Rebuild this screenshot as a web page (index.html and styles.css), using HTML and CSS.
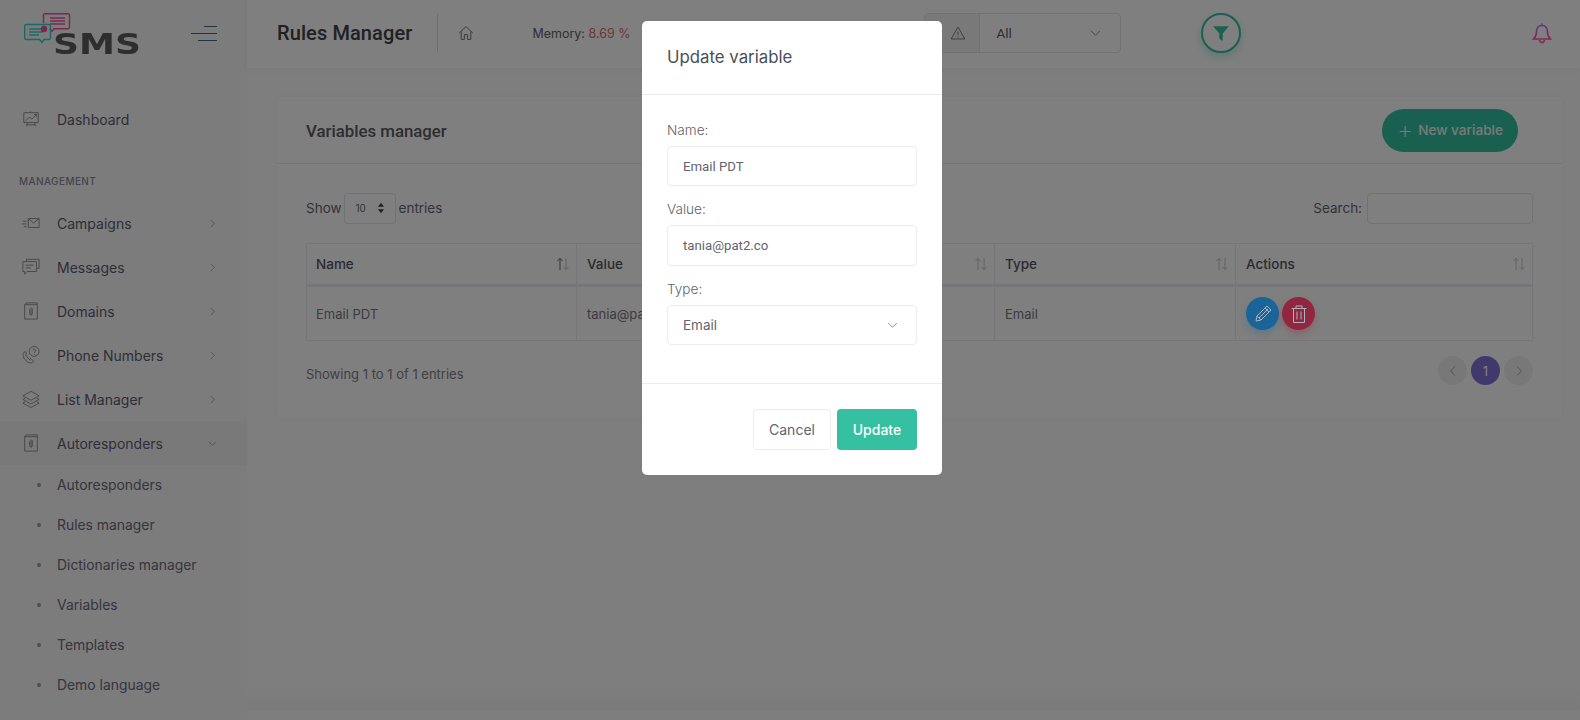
FILE: index.html
```html
<!DOCTYPE html>
<html lang="en">
<head>
    <meta charset="UTF-8">
    <meta name="viewport" content="width=device-width, initial-scale=1.0">
    <title>Rules Manager</title>
    <link rel="stylesheet" href="styles.css">
</head>
<body>
    <div class="layout">
        <aside class="sidebar">
            <div class="brand">
                <svg class="logo" viewBox="0 0 118 46" width="118" height="46">
                    <g fill="none" stroke-width="1.400">
                        <path d="M21 .8h23a1.500 1.500 0 0 1 1.500 1.500v12a1.500 1.500 0 0 1-1.500 1.500H30l-2 2.500-2.500-2.500" stroke="#7a2850"/>
                        <path d="M26 5h15M26 8h15M26 11h15" stroke="#7a2850"/>
                        <path d="M21 .8a1.500 1.500 0 0 0-1.500 1.500v8" stroke="#7a2850"/>
                        <path d="M2 11.500h23a1.500 1.500 0 0 1 1.500 1.500v12a1.500 1.500 0 0 1-1.500 1.500h-5l-2 3-2.500-3H2A1.500 1.500 0 0 1 .7 25V13A1.500 1.500 0 0 1 2 11.500z" stroke="#1b6868"/>
                        <path d="M5 16h14M5 19h14M5 22h10" stroke="#1b6868"/>
                    </g>
                    <circle cx="20" cy="16" r="3.200" fill="#7a2850"/>
                    <text class="logo-text" x="29" y="41" textLength="88" lengthAdjust="spacingAndGlyphs">SMS</text>
                </svg>
                <button class="burger" aria-label="Toggle menu"><span></span><span></span><span></span></button>
            </div>
            <nav class="menu">
                <a class="menu-item">
                    <svg class="menu-icon" viewBox="0 0 20 20"><path d="M2 3h16v11H2zM9.500 3V1.500M6 14l-1 4M14 14l1 4M5.500 16.500h9M4 12l4-4 3 2 5-5M13.500 5H16v2.500"/></svg>
                    <span>Dashboard</span>
                </a>
                <div class="menu-title">MANAGEMENT</div>
                <a class="menu-item">
                    <svg class="menu-icon" viewBox="0 0 20 20"><path d="M7 5h12v10H7zM7 5l6 5 6-5M1 8h4M0 11h5M2 14h3"/></svg>
                    <span>Campaigns</span>
                    <svg class="chev" viewBox="0 0 10 10"><path d="M3 1l4 4-4 4"/></svg>
                </a>
                <a class="menu-item">
                    <svg class="menu-icon" viewBox="0 0 20 20"><path d="M5 3.500V1.500h14v10h-3M1 4h15v11H5.500L3 18v-3H1zM4 8h9M4 11h6"/></svg>
                    <span>Messages</span>
                    <svg class="chev" viewBox="0 0 10 10"><path d="M3 1l4 4-4 4"/></svg>
                </a>
                <a class="menu-item">
                    <svg class="menu-icon" viewBox="0 0 20 20"><path d="M3 3h14v16H3zM3 3l1.500-2h12.500v2M10 6v8M8.500 8v5a1.500 1.500 0 0 0 3 0V7"/></svg>
                    <span>Domains</span>
                    <svg class="chev" viewBox="0 0 10 10"><path d="M3 1l4 4-4 4"/></svg>
                </a>
                <a class="menu-item">
                    <svg class="menu-icon" viewBox="0 0 20 20"><circle cx="13.500" cy="6" r="5.500"/><path d="M12 4.500a1.600 1.600 0 1 1 2 2v1M14 9v.5M3.500 6C0 8 1 13 4 16s7 4 9 1l-3-3-2 1-4-5 1-2z"/></svg>
                    <span>Phone Numbers</span>
                    <svg class="chev" viewBox="0 0 10 10"><path d="M3 1l4 4-4 4"/></svg>
                </a>
                <a class="menu-item">
                    <svg class="menu-icon" viewBox="0 0 20 20"><path d="M10 1.500L19 6.500l-9 5-9-5zM3.500 9L1 10.500l9 5 9-5L16.500 9M3.500 13L1 14.500l9 5 9-5L16.500 13"/></svg>
                    <span>List Manager</span>
                    <svg class="chev" viewBox="0 0 10 10"><path d="M3 1l4 4-4 4"/></svg>
                </a>
                <a class="menu-item active">
                    <svg class="menu-icon" viewBox="0 0 20 20"><path d="M3 3h14v16H3zM3 3l1.500-2h12.500v2M10 6v8M8.500 8v5a1.500 1.500 0 0 0 3 0V7"/></svg>
                    <span>Autoresponders</span>
                    <svg class="chev" viewBox="0 0 10 10"><path d="M1 3l4 4 4-4"/></svg>
                </a>
                <ul class="submenu">
                    <li>Autoresponders</li>
                    <li>Rules manager</li>
                    <li>Dictionaries manager</li>
                    <li>Variables</li>
                    <li>Templates</li>
                    <li>Demo language</li>
                </ul>
            </nav>
        </aside>

        <div class="main">
            <header class="topbar">
                <h1 class="page-title">Rules Manager</h1>
                <svg class="home-icon" viewBox="0 0 20 20"><path d="M1.500 10L10 2l8.500 8M4 8v10h4v-6h4v6h4V8"/></svg>
                <div class="memory">Memory: <span class="memory-value">8.69 %</span></div>
                <div class="alert-filter">
                    <span class="alert-addon">
                        <svg viewBox="0 0 20 20"><path d="M10 2.500L18.500 17.500h-17zM10 8v5M10 14.500v1.500"/></svg>
                    </span>
                    <span class="alert-select">All
                        <svg class="chev-big" viewBox="0 0 12 8"><path d="M1 1l5 5 5-5"/></svg>
                    </span>
                </div>
                <button class="filter-btn" aria-label="Filter">
                    <svg viewBox="0 0 16 16"><path d="M1 2h14L9.500 8.500V15l-3-2V8.500z"/></svg>
                </button>
                <svg class="bell" viewBox="0 0 20 22">
                    <defs>
                        <linearGradient id="bell-grad" x1="0" y1="0" x2="0" y2="1">
                            <stop offset="0" stop-color="#5f3388"/>
                            <stop offset="1" stop-color="#8c2850"/>
                        </linearGradient>
                    </defs>
                    <path d="M10 1.500v2M10 3.500c-4 0-5.500 3-5.500 6.500 0 3.500-1 5-3 7h17c-2-2-3-3.500-3-7 0-3.500-1.500-6.500-5.500-6.500zM7.500 18c.5 2 1.500 2.500 2.500 2.500s2-.5 2.500-2.500" fill="none" stroke="url(#bell-grad)" stroke-width="1.600"/>
                </svg>
            </header>

            <section class="card">
                <div class="card-head">
                    <h2>Variables manager</h2>
                    <button class="btn-new"><span class="plus">+</span> New variable</button>
                </div>
                <div class="card-body">
                    <div class="table-tools">
                        <div class="length">Show
                            <span class="length-select">10
                                <svg viewBox="0 0 8 14"><path d="M4 1l3.500 4.500h-7zM4 13L.5 8.500h7z"/></svg>
                            </span>
                            entries</div>
                        <div class="search">Search: <span class="search-box"></span></div>
                    </div>
                    <table class="data-table">
                        <thead>
                            <tr>
                                <th class="col-name">Name<svg class="sort" viewBox="0 0 14 14"><path class="on" d="M4 13V1.500M1.500 4L4 1.500 6.500 4"/><path d="M10 1v11.500M7.500 10l2.500 2.500 2.500-2.500"/></svg></th>
                                <th class="col-value">Value<svg class="sort" viewBox="0 0 14 14"><path d="M4 13V1.500M1.500 4L4 1.500 6.500 4M10 1v11.500M7.500 10l2.500 2.500 2.500-2.500"/></svg></th>
                                <th class="col-type">Type<svg class="sort" viewBox="0 0 14 14"><path d="M4 13V1.500M1.500 4L4 1.500 6.500 4M10 1v11.500M7.500 10l2.500 2.500 2.500-2.500"/></svg></th>
                                <th>Actions<svg class="sort" viewBox="0 0 14 14"><path d="M4 13V1.500M1.500 4L4 1.500 6.500 4M10 1v11.500M7.500 10l2.500 2.500 2.500-2.500"/></svg></th>
                            </tr>
                        </thead>
                        <tbody>
                            <tr>
                                <td>Email PDT</td>
                                <td>tania@pat2.co</td>
                                <td>Email</td>
                                <td>
                                    <div class="row-actions">
                                        <button class="round blue" aria-label="Edit">
                                            <svg viewBox="0 0 20 20"><path d="M3 17l1-5L14 2l4 4L8 16zM12 4l4 4M4 12l4 4M6 14L15 5"/></svg>
                                        </button>
                                        <button class="round red" aria-label="Delete">
                                            <svg viewBox="0 0 20 20"><path d="M2.500 4.500h15M7 4.500V2h6v2.500M4.500 4.500v14h11v-14M8 7.500v8M12 7.500v8"/></svg>
                                        </button>
                                    </div>
                                </td>
                            </tr>
                        </tbody>
                    </table>
                    <div class="table-foot">
                        <div class="info">Showing 1 to 1 of 1 entries</div>
                        <div class="pages">
                            <span class="page"><svg viewBox="0 0 10 10"><path d="M7 0.500L2.500 5 7 9.500"/></svg></span>
                            <span class="page current">1</span>
                            <span class="page"><svg viewBox="0 0 10 10"><path d="M3 0.500L7.500 5 3 9.500"/></svg></span>
                        </div>
                    </div>
                </div>
            </section>
            <div class="page-foot"></div>
        </div>
    </div>

    <div class="backdrop"></div>

    <div class="modal">
        <div class="modal-head">Update variable</div>
        <form class="modal-body">
            <label class="field-label">Name:</label>
            <div class="field roboto">Email PDT</div>
            <label class="field-label">Value:</label>
            <div class="field field-value roboto">tania@pat2.co</div>
            <label class="field-label">Type:</label>
            <div class="field select">Email
                <svg class="chev-big" viewBox="0 0 12 8"><path d="M1 1l5 5 5-5"/></svg>
            </div>
        </form>
        <div class="modal-foot">
            <button class="btn btn-cancel">Cancel</button>
            <button class="btn btn-update">Update</button>
        </div>
    </div>
</body>
</html>
```

FILE: styles.css
```css
* {
    box-sizing: border-box;
}

html, body {
    height: 100%;
}

body {
    margin: 0;
    font-family: Inter, "Noto Sans", sans-serif;
    font-size: 14px;
    color: #6e6b7b;
    background-color: #fcfcfc;
    overflow: hidden;
}

button {
    font-family: inherit;
    border: none;
    padding: 0;
    cursor: pointer;
}

.layout {
    display: flex;
    height: 720px;
}

/* sidebar */
.sidebar {
    width: 247px;
    flex-shrink: 0;
    background-color: #f8f8f8;
}

.brand {
    display: flex;
    align-items: flex-start;
    justify-content: space-between;
    height: 68px;
    padding: 13px 30px 0 24px;
}

/* the logo and bell keep their colour over the backdrop, as in the reference */
.logo {
    display: block;
    position: relative;
    z-index: 2;
    overflow: visible;
}

.logo-text {
    font-family: "DejaVu Sans", sans-serif;
    font-weight: 700;
    font-size: 29px;
    fill: #2e2e2e;
}

.burger {
    display: flex;
    flex-direction: column;
    align-items: flex-end;
    gap: 6px;
    width: 26px;
    margin-top: 13px;
    background: none;
}

.burger span {
    display: block;
    height: 1px;
    background-color: #3d6f8f;
}

.burger span:nth-child(1) {
    width: 13px;
}

.burger span:nth-child(2) {
    width: 26px;
}

.burger span:nth-child(3) {
    width: 19px;
}

.menu {
    padding-top: 29px;
}

.menu-item {
    display: flex;
    align-items: center;
    height: 44px;
    padding: 0 30px 0 22px;
    color: #5f5d70;
    font-size: 14px;
}

.menu-item span {
    margin-left: 17px;
    flex-grow: 1;
}

.menu-item.active {
    background-color: #f3f3f3;
}

.menu-icon {
    width: 18px;
    height: 18px;
    flex-shrink: 0;
    fill: none;
    stroke: #8a8a94;
    stroke-width: 1;
}

.chev {
    width: 9px;
    height: 9px;
    fill: none;
    stroke: #a8a8ad;
    stroke-width: 1;
}

.menu-title {
    margin: 33px 0 12px 19px;
    color: #8a8a9c;
    font-size: 10px;
    font-weight: 500;
    letter-spacing: 0.4px;
    line-height: 15px;
}

.submenu {
    list-style: none;
    margin: 0;
    padding: 0;
}

.submenu li {
    position: relative;
    height: 40px;
    line-height: 40px;
    padding-left: 57px;
    color: #6e6b7b;
    font-size: 13.900px;
}

.submenu li::before {
    content: "";
    position: absolute;
    left: 37px;
    top: 18px;
    width: 4px;
    height: 4px;
    border-radius: 50%;
    background-color: #9a9aa8;
}

/* top bar */
.main {
    flex-grow: 1;
    display: flex;
    flex-direction: column;
    min-width: 0;
}

.topbar {
    display: flex;
    align-items: center;
    height: 68px;
    padding: 0 28px 2px 30px;
    background-color: #ffffff;
    box-shadow: 0 2px 6px rgba(0, 0, 0, 0.04);
}

.page-title {
    margin: 0;
    padding-right: 25px;
    height: 38px;
    line-height: 38px;
    border-right: 1px solid #dddddd;
    font-family: Roboto, sans-serif;
    font-size: 20px;
    font-weight: 500;
    letter-spacing: 0.1px;
    color: #42424a;
}

.home-icon {
    width: 16px;
    height: 16px;
    margin-left: 20px;
    fill: none;
    stroke: #70707c;
    stroke-width: 1.200;
}

.memory {
    margin-left: 58px;
    font-size: 12.500px;
    color: #5e5e68;
    white-space: nowrap;
}

.memory-value {
    color: #e06a72;
}

.alert-filter {
    display: flex;
    width: 197px;
    height: 40px;
    margin-left: 293px;
    border: 1px solid #e4e4e6;
    border-radius: 4px;
}

.alert-addon {
    display: flex;
    align-items: center;
    justify-content: flex-end;
    width: 55px;
    padding-right: 13px;
    background-color: #f3f3f5;
    border-right: 1px solid #e4e4e6;
}

.alert-addon svg {
    width: 16px;
    height: 16px;
    fill: none;
    stroke: #7a7a88;
    stroke-width: 1.200;
}

.alert-select {
    display: flex;
    align-items: center;
    justify-content: space-between;
    flex-grow: 1;
    padding: 0 19px 0 17px;
    font-family: Roboto, sans-serif;
    font-size: 13.500px;
    color: #5c5c68;
}

.chev-big {
    width: 11px;
    height: 7px;
    fill: none;
    stroke: #7a7a88;
    stroke-width: 1;
}

.filter-btn {
    display: flex;
    align-items: center;
    justify-content: center;
    width: 40px;
    height: 40px;
    margin-left: 80px;
    border: 2px solid #35c0a1;
    border-radius: 50%;
    background-color: #ffffff;
    box-shadow: 0 4px 10px rgba(53, 192, 161, 0.3);
}

.filter-btn svg {
    width: 18px;
    height: 18px;
    fill: #35c0a1;
}

.bell {
    position: relative;
    z-index: 2;
    width: 20px;
    height: 22px;
    margin-left: auto;
}

/* card */
.card {
    margin: 29px 18px 0 30px;
    height: 320px;
    background-color: #ffffff;
    border-radius: 4px;
    box-shadow: 0 0 6px rgba(0, 0, 0, 0.03);
}

.card-head {
    display: flex;
    align-items: center;
    justify-content: space-between;
    height: 67px;
    padding: 2px 44px 0 29px;
    border-bottom: 1px solid #e8e8e8;
}

.card-head h2 {
    margin: 0;
    font-family: Roboto, sans-serif;
    font-size: 16.800px;
    font-weight: 500;
    color: #5a5a62;
}

.btn-new {
    display: flex;
    align-items: center;
    justify-content: center;
    gap: 5px;
    width: 136px;
    height: 43px;
    margin-bottom: 2px;
    border-radius: 22px;
    background-color: #35c0a1;
    color: #e8f8f4;
    font-size: 13.600px;
    font-weight: 500;
}

.plus {
    font-size: 25px;
    font-weight: 200;
    line-height: 1;
}

.card-body {
    padding: 28px 29px 0 29px;
}

.table-tools {
    display: flex;
    align-items: center;
    justify-content: space-between;
    height: 32px;
    font-size: 13.500px;
    color: #66666f;
}

.length {
    display: flex;
    align-items: center;
    gap: 2px;
}

.length-select {
    display: flex;
    align-items: center;
    justify-content: space-between;
    width: 52px;
    height: 31px;
    margin-right: 1px;
    padding: 0 10px 0 11px;
    border: 1px solid #e4e4e8;
    border-radius: 4px;
    font-size: 10px;
}

.length-select svg {
    width: 8px;
    height: 12px;
    fill: #44444c;
}

.search {
    display: flex;
    align-items: center;
    gap: 5px;
}

.search-box {
    display: block;
    width: 166px;
    height: 31px;
    border: 1px solid #e4e4e8;
    border-radius: 4px;
}

.data-table {
    width: 100%;
    margin-top: 19px;
    border-collapse: collapse;
    table-layout: fixed;
    font-size: 13px;
}

.data-table th, .data-table td {
    border: 1px solid #ececf0;
    padding: 0 10px;
    text-align: left;
}

.data-table th:first-child, .data-table td:first-child {
    padding-left: 9px;
}

.data-table th {
    position: relative;
    height: 42px;
    border-bottom: 3px solid #ececf0;
    font-size: 13.500px;
    font-weight: 500;
    color: #55555f;
}

.data-table td {
    height: 55px;
    color: #777784;
}

.col-name {
    width: 270px;
}

.col-value {
    width: 418px;
}

.col-type {
    width: 241px;
}

.sort {
    position: absolute;
    right: 6px;
    top: 13px;
    width: 14px;
    height: 14px;
    fill: none;
    stroke: #c4c4cc;
    stroke-width: 1;
}

.sort .on {
    stroke: #66666f;
}

.row-actions {
    display: flex;
    gap: 3px;
}

/* kept above the backdrop, they stay saturated in the reference */
.round {
    position: relative;
    z-index: 2;
    display: flex;
    align-items: center;
    justify-content: center;
    width: 33px;
    height: 33px;
    border-radius: 50%;
}

.round svg {
    width: 20px;
    height: 20px;
    fill: none;
    stroke: #a8b4c0;
    stroke-width: 1;
}

.round.blue {
    background-color: #1b6499;
    box-shadow: 0 4px 6px rgba(27, 100, 153, 0.3);
}

.round.red {
    background-color: #93263f;
    box-shadow: 0 4px 6px rgba(147, 38, 63, 0.3);
}

.table-foot {
    display: flex;
    align-items: flex-start;
    justify-content: space-between;
    margin-top: 15px;
    font-size: 13px;
    color: #80808a;
}

.info {
    padding-top: 3px;
    line-height: 30px;
}

.pages {
    display: flex;
    gap: 4px;
}

.page {
    display: flex;
    align-items: center;
    justify-content: center;
    width: 29px;
    height: 29px;
    border-radius: 50%;
    background-color: #f0f0f2;
}

.page svg {
    width: 10px;
    height: 10px;
    fill: none;
    stroke: #a0a0aa;
    stroke-width: 1;
}

.page.current {
    background-color: #8075d8;
    color: #ffffff;
    font-size: 13px;
}

.page-foot {
    margin-top: auto;
    margin-bottom: 10px;
    height: 25px;
    background: linear-gradient(to bottom, #fcfcfc, #f5f6f6);
}

/* modal */
.backdrop {
    position: fixed;
    inset: 0;
    z-index: 1;
    background-color: rgba(0, 0, 0, 0.5);
}

.modal {
    position: fixed;
    top: 21px;
    left: 642px;
    z-index: 3;
    width: 300px;
    background-color: #ffffff;
    border-radius: 5px;
}

.modal-head {
    height: 74px;
    padding: 0 25px;
    line-height: 72px;
    border-bottom: 1px solid #e9ebec;
    font-size: 16.800px;
    color: #495057;
}

.modal-body {
    display: flex;
    flex-direction: column;
    height: 289px;
    padding: 25px 25px 0;
    border-bottom: 1px solid #e9ebec;
}

.field-label {
    height: 21px;
    line-height: 20px;
    margin-bottom: 5px;
    font-size: 13.600px;
    font-weight: 300;
    color: #5f636a;
}

.field {
    display: flex;
    align-items: center;
    justify-content: space-between;
    height: 40px;
    margin-bottom: 13px;
    padding: 0 18px 0 15px;
    border: 1px solid #ebedf0;
    border-radius: 4px;
    font-size: 13.500px;
    color: #5f6470;
}

.field-value {
    height: 41px;
}

.roboto {
    font-family: Roboto, sans-serif;
    font-size: 13.200px;
}

.modal-foot {
    display: flex;
    justify-content: flex-end;
    gap: 6px;
    padding: 25px 25px 25px;
}

.btn {
    height: 41px;
    border-radius: 4px;
    font-size: 14px;
}

.btn-cancel {
    width: 78px;
    border: 1px solid #ebedf0;
    background-color: #ffffff;
    color: #5f6470;
}

.btn-update {
    width: 80px;
    background-color: #35c0a1;
    color: #ffffff;
    font-weight: 500;
}
```
